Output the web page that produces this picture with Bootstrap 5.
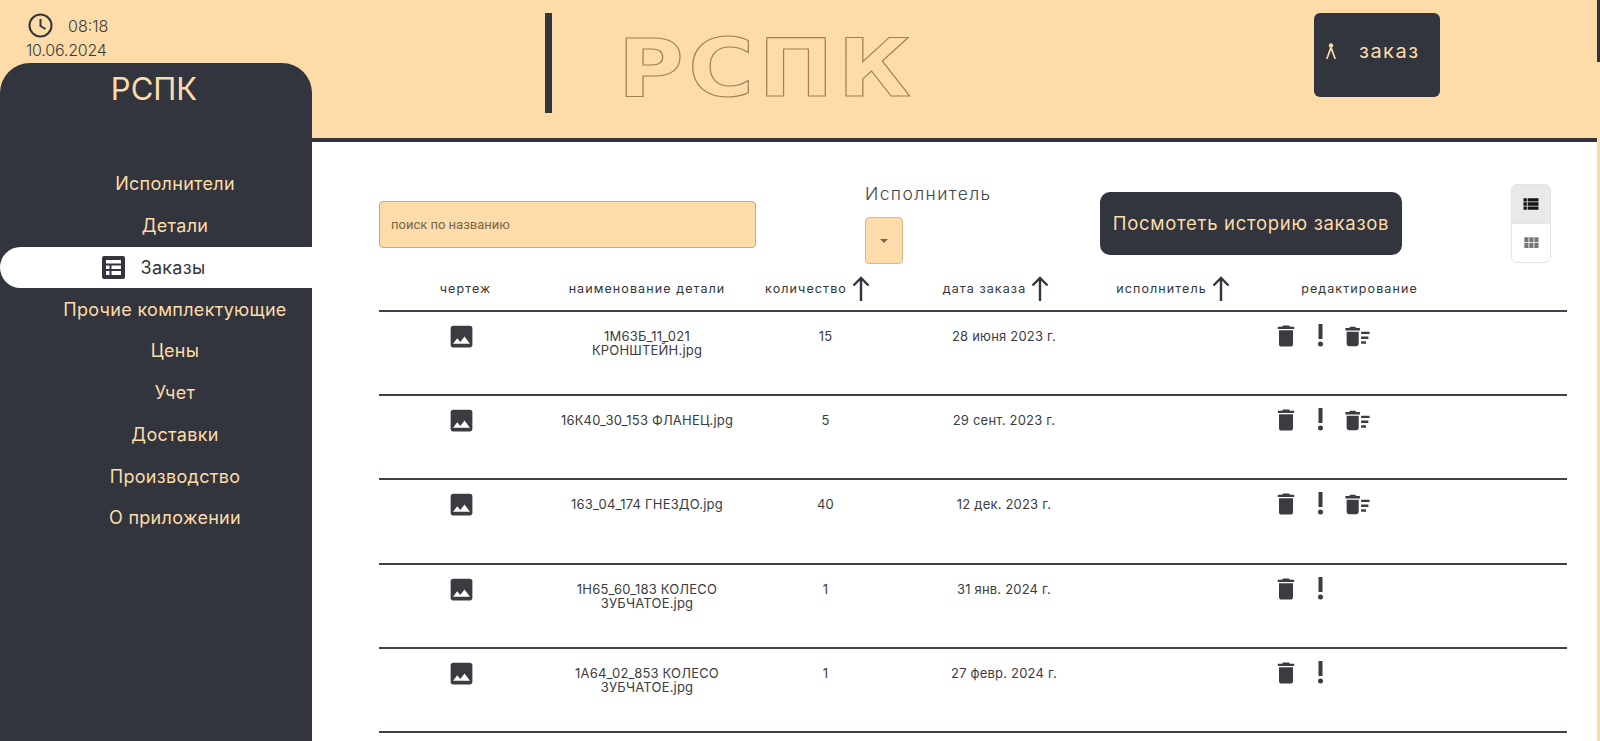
<!DOCTYPE html>
<html lang="ru">
<head>
  <meta charset="UTF-8" />
  <title>РСПК</title>
  <link href="https://cdn.jsdelivr.net/npm/bootstrap@5.3.0/dist/css/bootstrap.min.css" rel="stylesheet" />
  <style>
    html, body { height: 741px; overflow: hidden; }
    body { background: #fddca9; color: #32353d; font-family: Inter, "Noto Sans", sans-serif; }
    svg { display: block; fill: currentColor; flex: none; }

    /* каркас страницы */
    .shell { display: grid; grid-template-columns: 312px 1fr 3px; height: 741px; }
    .left-col { display: flex; flex-direction: column; min-height: 0; }
    .edge-mark { height: 62px; background: #32353d; }

    /* часы */
    .clock-box { height: 63px; padding: 13px 0 0 26px; font-size: 16px; line-height: 20px; font-weight: 300; color: #3c3c3c; }
    .clock-time { display: flex; align-items: center; gap: 15px; padding-left: 2px; height: 25px; }
    .clock-date { letter-spacing: -.2px; margin-top: 2px; }
    .clock-time svg { fill: none; stroke: #32353d; stroke-width: 2; }

    /* боковое меню */
    .side-panel { flex: 1; background: #32353d; border-radius: 30px 30px 0 0; color: #fddca9; }
    .side-title { height: 100px; padding-top: 6px; text-align: center; font-size: 31px; line-height: 40px; padding-right: 4px; }
    .side-link { display: flex; align-items: center; justify-content: center; height: 41.75px; padding-left: 38px; font-size: 18px; letter-spacing: .3px; color: #fddca9; text-decoration: none; }
    .side-link.is-active { background: #fff; color: #32353d; padding-left: 0; padding-right: 4px; gap: 15px; border-radius: 21px 0 0 21px; }

    /* шапка */
    .top-bar { height: 142px; border-bottom: 4px solid #32353d; display: flex; }
    .top-rule { width: 7px; height: 100px; margin: 13px 0 0 233px; background: #32353d; }
    .top-logo { margin: 19px 0 0 66px; width: 300px; font-family: "DejaVu Sans", sans-serif; font-weight: 700; font-size: 80px; line-height: 100px; letter-spacing: 4px; color: transparent; -webkit-text-stroke: 1.1px #9c8259; transform: scaleX(1.12); transform-origin: left center; }
    .order-btn { display: flex; align-items: flex-start; gap: 22px; width: 126px; height: 84px; margin: 13px 0 0 396px; padding: 26px 0 0 10px; background: #32353d; border-radius: 6px; color: #fddca9; font-size: 20px; letter-spacing: 1.5px; line-height: 22px; }
    .order-btn:hover, .order-btn:active { background: #32353d; color: #fddca9; }
    .order-btn svg { margin-top: 2px; }

    /* панель фильтров */
    .work-area { background: #fff; padding: 0 30px 0 67px; overflow: hidden; height: 599px; }
    .filter-bar { display: flex; align-items: flex-start; height: 126px; padding-top: 42px; }
    .search-box { width: 377px; height: 47px; margin: 17px 109px 0 0; background: #fddca9; border-color: #c9aa7c; border-radius: 4px; padding-left: 11px; font-family: Roboto, sans-serif; font-size: 13px; }
    .search-box::placeholder { color: #77654c; }
    .search-box:focus { background: #fddca9; }
    .exec-box { width: 235px; }
    .exec-label { font-size: 17.5px; line-height: 19px; font-weight: 300; letter-spacing: 1.4px; color: #444; }
    .exec-btn { display: flex; align-items: center; justify-content: center; width: 38px; height: 47px; margin-top: 14px; padding: 0; background: #fddca9; border: 1px solid #d9b988; border-radius: 4px; color: #77654c; }
    .exec-btn::after { margin: 0; }
    .exec-btn:hover, .exec-btn:active, .exec-btn.show { background: #fddca9; border-color: #d9b988; color: #77654c; }
    .history-btn { width: 302px; height: 63px; margin-top: 8px; background: #32353d; border-radius: 10px; color: #fddca9; font-size: 18.5px; letter-spacing: .7px; padding: 0; }
    .history-btn:hover, .history-btn:active { background: #32353d; color: #fddca9; }
    .view-switch { width: 40px; margin: 0 16px 0 auto; }
    .view-btn { display: flex; align-items: center; justify-content: center; height: 40px; padding: 0; background: #fff; border-color: #e4e4e4; color: #777; }
    .view-btn.is-on { background: #e9e9e9; color: #141414; }
    .view-btn:hover { background: #e9e9e9; border-color: #e4e4e4; }

    /* список заказов */
    .order-row { display: grid; grid-template-columns: 173px 190px 167px 190px 148px 1fr; border-bottom: 2.5px solid #3e424a; }
    .order-head { height: 44px; align-items: center; font-size: 12.5px; letter-spacing: 1.1px; line-height: 15px; text-align: center; }
    .head-sort { display: flex; align-items: center; justify-content: center; gap: 5px; }
    .head-qty { padding-right: 16px; }
    .head-date { padding-right: 16px; }
    .head-edit { padding-right: 95px; }
    .head-plain { padding-bottom: 2px; }
    .head-arrow { fill: none; stroke: #32353d; stroke-width: 2.4; margin-top: -1px; }
    .head-sort span { padding-bottom: 2px; }
    .order-item { height: 84.2px; font-size: 13px; letter-spacing: .2px; line-height: 14px; text-align: center; color: #3a3c42; }
    .order-item > div { padding-top: 17px; }
    .order-item > .pic-cell { padding: 10px 8px 0 0; display: flex; justify-content: center; }
    .order-item > .act-cell { padding: 10px 0 0 25px; display: flex; align-items: flex-start; }
    .order-item > .name-cell { padding-left: 4px; padding-right: 4px; }
    .act-bang { width: 5px; margin: 2px 20px 0 18px; }
  </style>
</head>
<body>

  <div class="shell">
    <!-- левая колонка -->
    <div class="left-col">
      <div class="clock-box">
        <div class="clock-time">
          <svg width="25" height="25" viewBox="0 0 25 25"><circle cx="12.5" cy="12.5" r="11" /><path d="M12.5 6v7l5 3" /></svg>
          <span>08:18</span>
        </div>
        <div class="clock-date">10.06.2024</div>
      </div>
      <nav class="side-panel">
        <div class="side-title">РСПК</div>
        <a class="side-link" href="#">Исполнители</a>
        <a class="side-link" href="#">Детали</a>
        <a class="side-link is-active" href="#">
          <svg width="23" height="23" viewBox="0 0 23 23"><path fill-rule="evenodd" d="M2 0h19a2 2 0 0 1 2 2v19a2 2 0 0 1-2 2H2a2 2 0 0 1-2-2V2a2 2 0 0 1 2-2zM4 4v3.5h15V4zM4 9.5V13h3.5V9.5zm5.5 0V13H19V9.5zM4 15v4h3.5v-4zm5.5 0v4H19v-4z" /></svg>
          <span>Заказы</span>
        </a>
        <a class="side-link" href="#">Прочие комплектующие</a>
        <a class="side-link" href="#">Цены</a>
        <a class="side-link" href="#">Учет</a>
        <a class="side-link" href="#">Доставки</a>
        <a class="side-link" href="#">Производство</a>
        <a class="side-link" href="#">О приложении</a>
      </nav>
    </div>

    <!-- основная часть -->
    <div>
      <header class="top-bar">
        <div class="top-rule"></div>
        <div class="top-logo">РСПК</div>
        <button type="button" class="btn order-btn">
          <svg width="12" height="18" viewBox="0 0 12 18"><circle cx="6" cy="3.5" r="2.2" /><path d="M5 5.5 1 17h1.6L6 8l3.4 9H11L7 5.5z" /></svg>
          <span>заказ</span>
        </button>
      </header>

      <main class="work-area">
        <div class="filter-bar">
          <input type="text" class="form-control search-box" placeholder="поиск по названию" />
          <div class="exec-box">
            <div class="exec-label">Исполнитель</div>
            <button type="button" class="btn exec-btn dropdown-toggle" data-bs-toggle="dropdown"></button>
          </div>
          <button type="button" class="btn history-btn">Посмотеть историю заказов</button>
          <div class="btn-group-vertical view-switch">
            <button type="button" class="btn view-btn is-on">
              <svg width="20" height="20" viewBox="0 0 24 24"><path d="M3 14h4v-4H3v4zm0 5h4v-4H3v4zM3 9h4V5H3v4zm5 5h13v-4H8v4zm0 5h13v-4H8v4zM8 5v4h13V5H8z" /></svg>
            </button>
            <button type="button" class="btn view-btn">
              <svg width="20" height="20" viewBox="0 0 24 24"><path d="M4 11h5V5H4v6zm0 7h5v-6H4v6zm6 0h5v-6h-5v6zm6 0h5v-6h-5v6zm-6-7h5V5h-5v6zm6-6v6h5V5h-5z" /></svg>
            </button>
          </div>
        </div>

        <div class="order-row order-head">
          <div class="head-plain">чертеж</div>
          <div class="head-plain">наименование детали</div>
          <div class="head-sort head-qty"><span>количество</span>
            <svg class="head-arrow" width="18" height="26" viewBox="0 0 18 26"><path d="M9 25V2M1.5 9.5 9 2l7.5 7.5" /></svg>
          </div>
          <div class="head-sort head-date"><span>дата заказа</span>
            <svg class="head-arrow" width="18" height="26" viewBox="0 0 18 26"><path d="M9 25V2M1.5 9.5 9 2l7.5 7.5" /></svg>
          </div>
          <div class="head-sort"><span>исполнитель</span>
            <svg class="head-arrow" width="18" height="26" viewBox="0 0 18 26"><path d="M9 25V2M1.5 9.5 9 2l7.5 7.5" /></svg>
          </div>
          <div class="head-plain head-edit">редактирование</div>
        </div>

        <div id="orders"></div>
      </main>
    </div>

    <div><div class="edge-mark"></div></div>
  </div>

  <script src="https://cdn.jsdelivr.net/npm/bootstrap@5.3.0/dist/js/bootstrap.bundle.min.js"></script>
  <script>
    // строки заказов
    const orders = [
      { name: '1М63Б_11_021 КРОНШТЕЙН.jpg', qty: 15, date: '28 июня 2023 г.', sweep: true },
      { name: '16К40_30_153 ФЛАНЕЦ.jpg', qty: 5, date: '29 сент. 2023 г.', sweep: true },
      { name: '163_04_174 ГНЕЗДО.jpg', qty: 40, date: '12 дек. 2023 г.', sweep: true },
      { name: '1Н65_60_183 КОЛЕСО ЗУБЧАТОЕ.jpg', qty: 1, date: '31 янв. 2024 г.', sweep: false },
      { name: '1А64_02_853 КОЛЕСО ЗУБЧАТОЕ.jpg', qty: 1, date: '27 февр. 2024 г.', sweep: false }
    ];

    const imageIcon = '<svg width="29" height="29" viewBox="0 0 24 24"><path d="M21 19V5c0-1.1-.9-2-2-2H5c-1.1 0-2 .9-2 2v14c0 1.1.9 2 2 2h14c1.1 0 2-.9 2-2zM8.5 13.5l2.5 3.01L14.5 12l4.5 6H5l3.5-4.5z"/></svg>';
    const trashIcon = '<svg width="28" height="28" viewBox="0 0 24 24"><path d="M6 19c0 1.1.9 2 2 2h8c1.1 0 2-.9 2-2V7H6v12zM19 4h-3.5l-1-1h-5l-1 1H5v2h14V4z"/></svg>';
    const bangIcon = '<svg class="act-bang" width="5" height="23" viewBox="0 0 5 23"><path d="M.5 0h4v15h-4z"/><circle cx="2.5" cy="20" r="2.5"/></svg>';
    const sweepIcon = '<svg width="29" height="29" viewBox="0 0 24 24"><path d="M15 16h4v2h-4zm0-8h7v2h-7zm0 4h6v2h-6zM3 18c0 1.1.9 2 2 2h6c1.1 0 2-.9 2-2V8H3v10zM14 5h-3l-1-1H6L5 5H2v2h12z"/></svg>';

    document.getElementById('orders').innerHTML = orders.map(o => `
      <div class="order-row order-item">
        <div class="pic-cell">${imageIcon}</div>
        <div class="name-cell">${o.name}</div>
        <div>${o.qty}</div>
        <div>${o.date}</div>
        <div></div>
        <div class="act-cell">${trashIcon}${bangIcon}${o.sweep ? sweepIcon : ''}</div>
      </div>`).join('');
  </script>
</body>
</html>
